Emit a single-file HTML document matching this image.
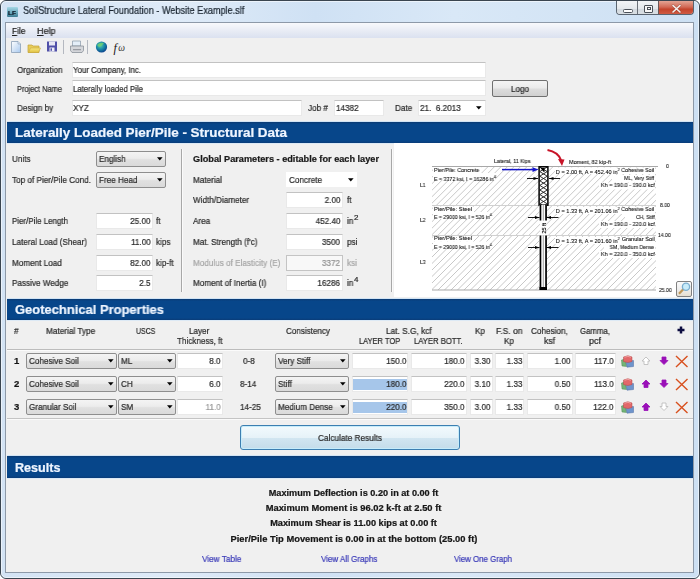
<!DOCTYPE html>
<html><head><meta charset="utf-8"><style>
*{margin:0;padding:0;box-sizing:border-box}
html,body{width:700px;height:579px;overflow:hidden;background:#fff}
body{position:relative;font-family:"Liberation Sans",sans-serif;font-size:9px;color:#222}
.a{position:absolute}
.t{position:absolute;white-space:nowrap;line-height:1;-webkit-text-stroke:0.22px currentColor;will-change:transform}
.hdr{position:absolute;left:7px;width:686px;height:21px;background:linear-gradient(#0b3a72,#07468a 10%,#07468a 90%,#0a3c78);box-shadow:0 -1px 0 #d2e4f4,0 1px 0 #dce9f5}
</style></head><body>
<div class="a" style="left:0;top:0;width:700px;height:579px;border:1px solid #3a4550;border-radius:6px 6px 6px 6px;background:linear-gradient(90deg,#d3e3f4 0%,#dfebf8 25%,#cfe1f4 45%,#d9e8f7 65%,#cde0f3 100%)"></div>
<div class="a" style="left:1px;top:1px;width:698px;height:577px;border:1px solid rgba(255,255,255,0.55);border-radius:5px"></div>
<div class="a" style="left:5px;top:22px;width:689px;height:551px;background:#f0f0f0;border:1px solid #8d99a8"></div>
<div class="a" style="left:6px;top:23px;width:687px;height:15px;background:linear-gradient(#f8f9fc,#e6eaf4 60%,#dbe1f0)"></div>
<div class="a" style="left:7px;top:6.5px;width:11px;height:10px;background:linear-gradient(#a6d8e6,#6aa8bc 55%,#3e7c92);border-radius:1px"></div>
<div class="t" style="left:8px;transform-origin:0 0;top:9.65px;font-size:6.2px;font-weight:bold;color:#0c1a28;transform:scaleX(1.0314);">LF</div>
<div class="t" style="left:22.5px;transform-origin:0 0;top:6.46px;font-size:10.2px;font-weight:normal;color:#1a2530;transform:scaleX(0.8950);">SoilStructure Lateral Foundation - Website Example.slf</div>
<div class="a" style="left:616px;top:1px;width:78px;height:14px;border:1px solid #5a6470;border-top:none;border-radius:0 0 4px 4px;overflow:hidden;background:#d0d6dc">
 <div class="a" style="left:0;top:0;width:21px;height:15px;background:linear-gradient(#f2f4f6,#e4e8ec 50%,#d2d8de 51%,#dde2e6);border-right:1px solid #6a7078"></div>
 <div class="a" style="left:21px;top:0;width:21px;height:15px;background:linear-gradient(#f2f4f6,#e4e8ec 50%,#d2d8de 51%,#dde2e6);border-right:1px solid #6a5858"></div>
 <div class="a" style="left:42px;top:0;width:36px;height:15px;background:linear-gradient(#e4a494,#d26a56 40%,#c4442c 55%,#cf5a42 85%,#d87a66)"></div>
 <div class="a" style="left:6px;top:7.5px;width:9.6px;height:4px;border:1px solid #4a5058;background:#fdfdfd;border-radius:1.5px"></div>
 <div class="a" style="left:27px;top:4px;width:9px;height:7.5px;border:1.2px solid #4a5058;border-radius:1px;background:#f6f6f6"></div>
 <div class="a" style="left:29.6px;top:6px;width:4.3px;height:2.8px;border:1px solid #4a5058;background:#fff"></div>
</div>
<svg class="a" style="left:658px;top:0.5px" width="36" height="16" viewBox="0 0 36 16"><path d="M15,4.5 L22,11 M22,4.5 L15,11" stroke="#5a2a20" stroke-width="2.6" stroke-linecap="round" opacity="0.3"/><path d="M15,4.5 L22,11 M22,4.5 L15,11" stroke="#f4f0ee" stroke-width="1.6" stroke-linecap="round"/></svg>
<svg class="a" style="left:0;top:36px" width="140" height="22" viewBox="0 36 140 22">
<defs>
<linearGradient id="gpage" x1="0" y1="0" x2="1" y2="1"><stop offset="0" stop-color="#ffffff"/><stop offset="1" stop-color="#a8c8ee"/></linearGradient>
<linearGradient id="gfold" x1="0" y1="0" x2="0" y2="1"><stop offset="0" stop-color="#f8e880"/><stop offset="1" stop-color="#e0c040"/></linearGradient>
<radialGradient id="gglobe" cx="0.4" cy="0.35" r="0.7"><stop offset="0" stop-color="#60d0a0"/><stop offset="0.5" stop-color="#1a8aa8"/><stop offset="1" stop-color="#0a3a8a"/></radialGradient>
</defs>
<path d="M11.5,41.5 H18 L20.5,44 V52.5 H11.5 Z" fill="url(#gpage)" stroke="#8aa0b8" stroke-width="0.8"/>
<path d="M18,41.5 V44 H20.5" fill="#dde8f4" stroke="#8aa0b8" stroke-width="0.6"/>
<path d="M28,45 H32 L33,46 H39 V52.5 H28 Z" fill="#e8cc58" stroke="#c0a038" stroke-width="0.7"/>
<path d="M28.5,52.5 L30.5,48 H40.5 L38.5,52.5 Z" fill="url(#gfold)" stroke="#c8a840" stroke-width="0.6"/>
<path d="M47,41.5 H57 V51.5 H47 Z" fill="#5050a8"/>
<rect x="49" y="41.5" width="6" height="4" fill="#e8e8f4"/>
<rect x="49.5" y="47.5" width="5" height="4" fill="#f0f0f8"/><rect x="50.5" y="48.3" width="1.5" height="2.5" fill="#5050a8"/>
<rect x="63" y="40" width="1" height="14" fill="#b4b8c0"/>
<path d="M72.5,41 H80.5 V46 H72.5 Z" fill="#e4eef8" stroke="#8898a8" stroke-width="0.7"/>
<path d="M70.5,46 H83.5 V50.5 L82,52.5 H72 L70.5,50.5 Z" fill="#d4d6da" stroke="#808690" stroke-width="0.7"/>
<rect x="73" y="49.2" width="8" height="1" fill="#8a8e96"/>
<rect x="87" y="40" width="1" height="14" fill="#b4b8c0"/>
<circle cx="101.5" cy="47" r="5.6" fill="url(#gglobe)"/>
<path d="M97,45 Q100,42 104,43 Q102,46 99,47 Z" fill="#70d070" opacity="0.8"/>
<text x="113.5" y="51.5" font-family="Liberation Serif" font-style="italic" font-size="12" fill="#151515">f</text>
<text x="118.3" y="51" font-family="Liberation Serif" font-style="italic" font-size="9.5" fill="#303030">ω</text>
</svg>
<div class="t" style="left:11.5px;transform-origin:0 0;top:26.52px;font-size:9.3px;font-weight:normal;color:#1e1e1e;transform:scaleX(0.9000);"><u>F</u>ile</div>
<div class="t" style="left:36.5px;transform-origin:0 0;top:26.52px;font-size:9.3px;font-weight:normal;color:#1e1e1e;transform:scaleX(0.9665);"><u>H</u>elp</div>
<div class="t" style="left:17px;transform-origin:0 0;top:65.98px;font-size:9px;font-weight:normal;color:#2a2a2a;transform:scaleX(0.8916);">Organization</div>
<div class="a" style="left:72px;top:62px;width:414px;height:16px;background:#fff;border:1px solid #e9e9e9;border-top-color:#c2c2c2;"></div>
<div class="t" style="left:73px;transform-origin:0 0;top:66.28px;font-size:9px;font-weight:normal;color:#2a2a2a;transform:scaleX(0.8713);">Your Company, Inc.</div>
<div class="t" style="left:17px;transform-origin:0 0;top:84.88px;font-size:9px;font-weight:normal;color:#2a2a2a;transform:scaleX(0.8252);">Project Name</div>
<div class="a" style="left:72px;top:80px;width:414px;height:16px;background:#fff;border:1px solid #e9e9e9;border-top-color:#c2c2c2;"></div>
<div class="t" style="left:73px;transform-origin:0 0;top:84.78px;font-size:9px;font-weight:normal;color:#2a2a2a;transform:scaleX(0.8635);">Laterally loaded Pile</div>
<div class="t" style="left:17px;transform-origin:0 0;top:104.08px;font-size:9px;font-weight:normal;color:#2a2a2a;transform:scaleX(0.9050);">Design by</div>
<div class="a" style="left:72px;top:100px;width:230px;height:16px;background:#fff;border:1px solid #e9e9e9;border-top-color:#c2c2c2;"></div>
<div class="t" style="left:73px;transform-origin:0 0;top:104.28px;font-size:9px;font-weight:normal;color:#2a2a2a;transform:scaleX(0.9050);">XYZ</div>
<div class="t" style="left:308px;transform-origin:0 0;top:104.08px;font-size:9px;font-weight:normal;color:#2a2a2a;transform:scaleX(0.9050);">Job #</div>
<div class="a" style="left:334px;top:100px;width:50px;height:16px;background:#fff;border:1px solid #e9e9e9;border-top-color:#c2c2c2;"></div>
<div class="t" style="left:335.5px;transform-origin:0 0;top:104.28px;font-size:9px;font-weight:normal;color:#2a2a2a;transform:scaleX(0.9050);">14382</div>
<div class="t" style="left:395px;transform-origin:0 0;top:104.08px;font-size:9px;font-weight:normal;color:#2a2a2a;transform:scaleX(0.9050);">Date</div>
<div class="a" style="left:418px;top:100px;width:68px;height:16px;background:#fff;border:1px solid #e9e9e9;border-top-color:#c2c2c2;"></div>
<div class="t" style="left:420px;transform-origin:0 0;top:104.28px;font-size:9px;font-weight:normal;color:#2a2a2a;transform:scaleX(0.9050);">21.&nbsp; 6.2013</div>
<svg class="a" style="left:476px;top:106px" width="6" height="4" viewBox="0 0 6 4"><path d="M0,0.3 H5.6 L2.8,3.4 Z" fill="#000"/></svg>
<div class="a" style="left:492px;top:80px;width:56px;height:17px;background:linear-gradient(#f4f4f4,#ebebeb 45%,#dcdcdc 55%,#d0d0d0);border:1px solid #707070;border-radius:2px"></div>
<div class="t" style="left:509.984375px;transform-origin:50% 0;top:85.08px;font-size:9px;font-weight:normal;color:#2a2a2a;transform:scaleX(0.9050);">Logo</div>
<div class="hdr" style="top:122px"></div>
<div class="t" style="left:15px;transform-origin:0 0;top:125.92px;font-size:13.2px;font-weight:bold;color:#eef5ff;transform:scaleX(1.0196);">Laterally Loaded Pier/Pile - Structural Data</div>
<div class="hdr" style="top:299px"></div>
<div class="t" style="left:15px;transform-origin:0 0;top:303.19px;font-size:13px;font-weight:bold;color:#eef5ff;transform:scaleX(0.9962);">Geotechnical Properties</div>
<div class="hdr" style="top:456px;height:21.5px"></div>
<div class="t" style="left:15px;transform-origin:0 0;top:461.63px;font-size:12.6px;font-weight:bold;color:#eef5ff;transform:scaleX(1.0000);">Results</div>
<div class="t" style="left:12px;transform-origin:0 0;top:154.78px;font-size:9px;font-weight:normal;color:#2a2a2a;transform:scaleX(0.9050);">Units</div>
<div class="a" style="left:96px;top:151px;width:70px;height:16px;background:linear-gradient(#f4f4f4,#ececec 45%,#e0e0e0 55%,#dadada);border:1px solid #8e8e8e;border-radius:2px"></div>
<div class="t" style="left:98.8px;transform-origin:0 0;top:155.48px;font-size:9px;font-weight:normal;color:#2a2a2a;transform:scaleX(0.9050);">English</div>
<svg class="a" style="left:156.5px;top:157.0px" width="6" height="4" viewBox="0 0 6 4"><path d="M0,0.3 H5.6 L2.8,3.4 Z" fill="#000"/></svg>
<div class="t" style="left:12px;transform-origin:0 0;top:175.88px;font-size:9px;font-weight:normal;color:#2a2a2a;transform:scaleX(0.9076);">Top of Pier/Pile Cond.</div>
<div class="a" style="left:96px;top:172px;width:70px;height:16px;background:linear-gradient(#f4f4f4,#ececec 45%,#e0e0e0 55%,#dadada);border:1px solid #8e8e8e;border-radius:2px"></div>
<div class="t" style="left:98.8px;transform-origin:0 0;top:176.48px;font-size:9px;font-weight:normal;color:#2a2a2a;transform:scaleX(0.9050);">Free Head</div>
<svg class="a" style="left:156.5px;top:178.0px" width="6" height="4" viewBox="0 0 6 4"><path d="M0,0.3 H5.6 L2.8,3.4 Z" fill="#000"/></svg>
<div class="t" style="left:12px;transform-origin:0 0;top:216.58px;font-size:9px;font-weight:normal;color:#2a2a2a;transform:scaleX(0.8812);">Pier/Pile Length</div>
<div class="a" style="left:96px;top:213px;width:57px;height:16px;background:#fff;border:1px solid #e9e9e9;border-top-color:#c2c2c2;"></div>
<div class="t" style="left:128.36875px;transform-origin:100% 0;top:216.98px;font-size:9px;font-weight:normal;color:#2a2a2a;transform:scaleX(0.9050);">25.00</div>
<div class="t" style="left:156.4px;transform-origin:0 0;top:216.58px;font-size:9px;font-weight:normal;color:#2a2a2a;transform:scaleX(0.9050);">ft</div>
<div class="t" style="left:12px;transform-origin:0 0;top:237.58px;font-size:9px;font-weight:normal;color:#2a2a2a;transform:scaleX(0.9084);">Lateral Load (Shear)</div>
<div class="a" style="left:96px;top:234px;width:57px;height:16px;background:#fff;border:1px solid #e9e9e9;border-top-color:#c2c2c2;"></div>
<div class="t" style="left:129.040625px;transform-origin:100% 0;top:237.98px;font-size:9px;font-weight:normal;color:#2a2a2a;transform:scaleX(0.9050);">11.00</div>
<div class="t" style="left:156.4px;transform-origin:0 0;top:237.58px;font-size:9px;font-weight:normal;color:#2a2a2a;transform:scaleX(0.9050);">kips</div>
<div class="t" style="left:12px;transform-origin:0 0;top:258.58px;font-size:9px;font-weight:normal;color:#2a2a2a;transform:scaleX(0.9050);">Moment Load</div>
<div class="a" style="left:96px;top:255px;width:57px;height:16px;background:#fff;border:1px solid #e9e9e9;border-top-color:#c2c2c2;"></div>
<div class="t" style="left:128.36875px;transform-origin:100% 0;top:258.98px;font-size:9px;font-weight:normal;color:#2a2a2a;transform:scaleX(0.9050);">82.00</div>
<div class="t" style="left:156.4px;transform-origin:0 0;top:258.58px;font-size:9px;font-weight:normal;color:#2a2a2a;transform:scaleX(0.9050);">kip-ft</div>
<div class="t" style="left:12px;transform-origin:0 0;top:278.58px;font-size:9px;font-weight:normal;color:#2a2a2a;transform:scaleX(0.9050);">Passive Wedge</div>
<div class="a" style="left:96px;top:275px;width:57px;height:16px;background:#fff;border:1px solid #e9e9e9;border-top-color:#c2c2c2;"></div>
<div class="t" style="left:138.384375px;transform-origin:100% 0;top:278.98px;font-size:9px;font-weight:normal;color:#2a2a2a;transform:scaleX(0.9050);">2.5</div>
<div class="a" style="left:181px;top:149px;width:1px;height:143px;background:#a8a8a8"></div>
<div class="a" style="left:182px;top:149px;width:1px;height:143px;background:#fafafa"></div>
<div class="a" style="left:390.5px;top:149px;width:1px;height:143px;background:#a8a8a8"></div>
<div class="a" style="left:391.5px;top:149px;width:1px;height:143px;background:#fafafa"></div>
<div class="t" style="left:193px;transform-origin:0 0;top:155.08px;font-size:9px;font-weight:bold;color:#1a1a1a;transform:scaleX(1.0187);">Global Parameters - editable for each layer</div>
<div class="t" style="left:193px;transform-origin:0 0;top:175.88px;font-size:9px;font-weight:normal;color:#2a2a2a;transform:scaleX(0.9050);">Material</div>
<div class="a" style="left:286px;top:172px;width:71px;height:15px;background:#fff"></div>
<div class="t" style="left:288.8px;transform-origin:0 0;top:175.98px;font-size:9px;font-weight:normal;color:#2a2a2a;transform:scaleX(0.9050);">Concrete</div>
<svg class="a" style="left:347.5px;top:177.5px" width="6" height="4" viewBox="0 0 6 4"><path d="M0,0.3 H5.6 L2.8,3.4 Z" fill="#000"/></svg>
<div class="t" style="left:193px;transform-origin:0 0;top:195.58px;font-size:9px;font-weight:normal;color:#2a2a2a;transform:scaleX(0.9050);">Width/Diameter</div>
<div class="a" style="left:286px;top:192px;width:57px;height:16px;background:#fff;border:1px solid #e9e9e9;border-top-color:#c2c2c2;"></div>
<div class="t" style="left:322.96875px;transform-origin:100% 0;top:195.98px;font-size:9px;font-weight:normal;color:#2a2a2a;transform:scaleX(0.9050);">2.00</div>
<div class="t" style="left:346.5px;transform-origin:0 0;top:195.58px;font-size:9px;font-weight:normal;color:#2a2a2a;transform:scaleX(0.9050);">ft</div>
<div class="t" style="left:193px;transform-origin:0 0;top:216.58px;font-size:9px;font-weight:normal;color:#2a2a2a;transform:scaleX(0.9050);">Area</div>
<div class="a" style="left:286px;top:213px;width:57px;height:16px;background:#fff;border:1px solid #e9e9e9;border-top-color:#c2c2c2;"></div>
<div class="t" style="left:312.96875px;transform-origin:100% 0;top:216.98px;font-size:9px;font-weight:normal;color:#2a2a2a;transform:scaleX(0.9050);">452.40</div>
<div class="t" style="left:346.5px;transform-origin:0 0;top:216.58px;font-size:9px;font-weight:normal;color:#2a2a2a;transform:scaleX(0.9050);">in</div>
<div class="t" style="left:353.5px;transform-origin:0 0;top:214.42px;font-size:8px;font-weight:normal;color:#2a2a2a;transform:scaleX(1.0000);">2</div>
<div class="t" style="left:193px;transform-origin:0 0;top:237.58px;font-size:9px;font-weight:normal;color:#2a2a2a;transform:scaleX(0.9050);">Mat. Strength (f'c)</div>
<div class="a" style="left:286px;top:234px;width:57px;height:16px;background:#fff;border:1px solid #e9e9e9;border-top-color:#c2c2c2;"></div>
<div class="t" style="left:320.46875px;transform-origin:100% 0;top:237.98px;font-size:9px;font-weight:normal;color:#2a2a2a;transform:scaleX(0.9050);">3500</div>
<div class="t" style="left:346.5px;transform-origin:0 0;top:237.58px;font-size:9px;font-weight:normal;color:#2a2a2a;transform:scaleX(0.9050);">psi</div>
<div class="t" style="left:193px;transform-origin:0 0;top:258.58px;font-size:9px;font-weight:normal;color:#a6a6a6;transform:scaleX(0.9050);">Modulus of Elasticity (E)</div>
<div class="a" style="left:286px;top:255px;width:57px;height:16px;background:#f8f8f8;border:1px solid #c4c4c4"></div>
<div class="t" style="left:320.46875px;transform-origin:100% 0;top:258.98px;font-size:9px;font-weight:normal;color:#909090;transform:scaleX(0.9050);">3372</div>
<div class="t" style="left:346.5px;transform-origin:0 0;top:258.58px;font-size:9px;font-weight:normal;color:#a6a6a6;transform:scaleX(0.9050);">ksi</div>
<div class="t" style="left:193px;transform-origin:0 0;top:278.58px;font-size:9px;font-weight:normal;color:#2a2a2a;transform:scaleX(0.9050);">Moment of Inertia (I)</div>
<div class="a" style="left:286px;top:275px;width:57px;height:16px;background:#fff;border:1px solid #e9e9e9;border-top-color:#c2c2c2;"></div>
<div class="t" style="left:315.46875px;transform-origin:100% 0;top:278.98px;font-size:9px;font-weight:normal;color:#2a2a2a;transform:scaleX(0.9050);">16286</div>
<div class="t" style="left:346.5px;transform-origin:0 0;top:278.58px;font-size:9px;font-weight:normal;color:#2a2a2a;transform:scaleX(0.9050);">in</div>
<div class="t" style="left:353.5px;transform-origin:0 0;top:276.42px;font-size:8px;font-weight:normal;color:#2a2a2a;transform:scaleX(1.0000);">4</div>
<div class="a" style="left:394px;top:143px;width:299px;height:154px;background:#fff"></div>
<svg class="a" style="left:0;top:0" width="700" height="579" viewBox="0 0 700 579"><defs><pattern id="conc" patternUnits="userSpaceOnUse" width="3.6" height="4.4" x="539.5" y="167"><rect width="3.6" height="4.4" fill="#fff"/><path d="M0,0 L3.6,4.4 M3.6,0 L0,4.4" stroke="#222" stroke-width="0.65"/></pattern></defs><clipPath id="sc166"><rect x="432" y="166" width="224" height="39.5"/></clipPath><path clip-path="url(#sc166)" d="M-54.80,300 L95.20,150 M-48.30,300 L101.70,150 M-41.80,300 L108.20,150 M-35.30,300 L114.70,150 M-28.80,300 L121.20,150 M-22.30,300 L127.70,150 M-15.80,300 L134.20,150 M-9.30,300 L140.70,150 M-2.80,300 L147.20,150 M3.70,300 L153.70,150 M10.20,300 L160.20,150 M16.70,300 L166.70,150 M23.20,300 L173.20,150 M29.70,300 L179.70,150 M36.20,300 L186.20,150 M42.70,300 L192.70,150 M49.20,300 L199.20,150 M55.70,300 L205.70,150 M62.20,300 L212.20,150 M68.70,300 L218.70,150 M75.20,300 L225.20,150 M81.70,300 L231.70,150 M88.20,300 L238.20,150 M94.70,300 L244.70,150 M101.20,300 L251.20,150 M107.70,300 L257.70,150 M114.20,300 L264.20,150 M120.70,300 L270.70,150 M127.20,300 L277.20,150 M133.70,300 L283.70,150 M140.20,300 L290.20,150 M146.70,300 L296.70,150 M153.20,300 L303.20,150 M159.70,300 L309.70,150 M166.20,300 L316.20,150 M172.70,300 L322.70,150 M179.20,300 L329.20,150 M185.70,300 L335.70,150 M192.20,300 L342.20,150 M198.70,300 L348.70,150 M205.20,300 L355.20,150 M211.70,300 L361.70,150 M218.20,300 L368.20,150 M224.70,300 L374.70,150 M231.20,300 L381.20,150 M237.70,300 L387.70,150 M244.20,300 L394.20,150 M250.70,300 L400.70,150 M257.20,300 L407.20,150 M263.70,300 L413.70,150 M270.20,300 L420.20,150 M276.70,300 L426.70,150 M283.20,300 L433.20,150 M289.70,300 L439.70,150 M296.20,300 L446.20,150 M302.70,300 L452.70,150 M309.20,300 L459.20,150 M315.70,300 L465.70,150 M322.20,300 L472.20,150 M328.70,300 L478.70,150 M335.20,300 L485.20,150 M341.70,300 L491.70,150 M348.20,300 L498.20,150 M354.70,300 L504.70,150 M361.20,300 L511.20,150 M367.70,300 L517.70,150 M374.20,300 L524.20,150 M380.70,300 L530.70,150 M387.20,300 L537.20,150 M393.70,300 L543.70,150 M400.20,300 L550.20,150 M406.70,300 L556.70,150 M413.20,300 L563.20,150 M419.70,300 L569.70,150 M426.20,300 L576.20,150 M432.70,300 L582.70,150 M439.20,300 L589.20,150 M445.70,300 L595.70,150 M452.20,300 L602.20,150 M458.70,300 L608.70,150 M465.20,300 L615.20,150 M471.70,300 L621.70,150 M478.20,300 L628.20,150 M484.70,300 L634.70,150 M491.20,300 L641.20,150 M497.70,300 L647.70,150 M504.20,300 L654.20,150 M510.70,300 L660.70,150 M517.20,300 L667.20,150 M523.70,300 L673.70,150 M530.20,300 L680.20,150 M536.70,300 L686.70,150 M543.20,300 L693.20,150 M549.70,300 L699.70,150 M556.20,300 L706.20,150 M562.70,300 L712.70,150 M569.20,300 L719.20,150 M575.70,300 L725.70,150 M582.20,300 L732.20,150 M588.70,300 L738.70,150 M595.20,300 L745.20,150 M601.70,300 L751.70,150 M608.20,300 L758.20,150 M614.70,300 L764.70,150 M621.20,300 L771.20,150 M627.70,300 L777.70,150 M634.20,300 L784.20,150 M640.70,300 L790.70,150 M647.20,300 L797.20,150 M653.70,300 L803.70,150 M660.20,300 L810.20,150 M666.70,300 L816.70,150 M673.20,300 L823.20,150 M679.70,300 L829.70,150 M686.20,300 L836.20,150 M692.70,300 L842.70,150 M699.20,300 L849.20,150" stroke="#c8c8c8" stroke-width="1" fill="none"/><clipPath id="sc205"><rect x="432" y="205.5" width="224" height="30.0"/></clipPath><path clip-path="url(#sc205)" d="M-23.30,300 L126.70,150 M-16.80,300 L133.20,150 M-10.30,300 L139.70,150 M-3.80,300 L146.20,150 M2.70,300 L152.70,150 M9.20,300 L159.20,150 M15.70,300 L165.70,150 M22.20,300 L172.20,150 M28.70,300 L178.70,150 M35.20,300 L185.20,150 M41.70,300 L191.70,150 M48.20,300 L198.20,150 M54.70,300 L204.70,150 M61.20,300 L211.20,150 M67.70,300 L217.70,150 M74.20,300 L224.20,150 M80.70,300 L230.70,150 M87.20,300 L237.20,150 M93.70,300 L243.70,150 M100.20,300 L250.20,150 M106.70,300 L256.70,150 M113.20,300 L263.20,150 M119.70,300 L269.70,150 M126.20,300 L276.20,150 M132.70,300 L282.70,150 M139.20,300 L289.20,150 M145.70,300 L295.70,150 M152.20,300 L302.20,150 M158.70,300 L308.70,150 M165.20,300 L315.20,150 M171.70,300 L321.70,150 M178.20,300 L328.20,150 M184.70,300 L334.70,150 M191.20,300 L341.20,150 M197.70,300 L347.70,150 M204.20,300 L354.20,150 M210.70,300 L360.70,150 M217.20,300 L367.20,150 M223.70,300 L373.70,150 M230.20,300 L380.20,150 M236.70,300 L386.70,150 M243.20,300 L393.20,150 M249.70,300 L399.70,150 M256.20,300 L406.20,150 M262.70,300 L412.70,150 M269.20,300 L419.20,150 M275.70,300 L425.70,150 M282.20,300 L432.20,150 M288.70,300 L438.70,150 M295.20,300 L445.20,150 M301.70,300 L451.70,150 M308.20,300 L458.20,150 M314.70,300 L464.70,150 M321.20,300 L471.20,150 M327.70,300 L477.70,150 M334.20,300 L484.20,150 M340.70,300 L490.70,150 M347.20,300 L497.20,150 M353.70,300 L503.70,150 M360.20,300 L510.20,150 M366.70,300 L516.70,150 M373.20,300 L523.20,150 M379.70,300 L529.70,150 M386.20,300 L536.20,150 M392.70,300 L542.70,150 M399.20,300 L549.20,150 M405.70,300 L555.70,150 M412.20,300 L562.20,150 M418.70,300 L568.70,150 M425.20,300 L575.20,150 M431.70,300 L581.70,150 M438.20,300 L588.20,150 M444.70,300 L594.70,150 M451.20,300 L601.20,150 M457.70,300 L607.70,150 M464.20,300 L614.20,150 M470.70,300 L620.70,150 M477.20,300 L627.20,150 M483.70,300 L633.70,150 M490.20,300 L640.20,150 M496.70,300 L646.70,150 M503.20,300 L653.20,150 M509.70,300 L659.70,150 M516.20,300 L666.20,150 M522.70,300 L672.70,150 M529.20,300 L679.20,150 M535.70,300 L685.70,150 M542.20,300 L692.20,150 M548.70,300 L698.70,150 M555.20,300 L705.20,150 M561.70,300 L711.70,150 M568.20,300 L718.20,150 M574.70,300 L724.70,150 M581.20,300 L731.20,150 M587.70,300 L737.70,150 M594.20,300 L744.20,150 M600.70,300 L750.70,150 M607.20,300 L757.20,150 M613.70,300 L763.70,150 M620.20,300 L770.20,150 M626.70,300 L776.70,150 M633.20,300 L783.20,150 M639.70,300 L789.70,150 M646.20,300 L796.20,150 M652.70,300 L802.70,150 M659.20,300 L809.20,150 M665.70,300 L815.70,150 M672.20,300 L822.20,150 M678.70,300 L828.70,150 M685.20,300 L835.20,150 M691.70,300 L841.70,150 M698.20,300 L848.20,150" stroke="#c8c8c8" stroke-width="1" fill="none"/><clipPath id="sc235"><rect x="432" y="235.5" width="224" height="54.5"/></clipPath><path clip-path="url(#sc235)" d="M18.50,300 L168.50,150 M25.00,300 L175.00,150 M31.50,300 L181.50,150 M38.00,300 L188.00,150 M44.50,300 L194.50,150 M51.00,300 L201.00,150 M57.50,300 L207.50,150 M64.00,300 L214.00,150 M70.50,300 L220.50,150 M77.00,300 L227.00,150 M83.50,300 L233.50,150 M90.00,300 L240.00,150 M96.50,300 L246.50,150 M103.00,300 L253.00,150 M109.50,300 L259.50,150 M116.00,300 L266.00,150 M122.50,300 L272.50,150 M129.00,300 L279.00,150 M135.50,300 L285.50,150 M142.00,300 L292.00,150 M148.50,300 L298.50,150 M155.00,300 L305.00,150 M161.50,300 L311.50,150 M168.00,300 L318.00,150 M174.50,300 L324.50,150 M181.00,300 L331.00,150 M187.50,300 L337.50,150 M194.00,300 L344.00,150 M200.50,300 L350.50,150 M207.00,300 L357.00,150 M213.50,300 L363.50,150 M220.00,300 L370.00,150 M226.50,300 L376.50,150 M233.00,300 L383.00,150 M239.50,300 L389.50,150 M246.00,300 L396.00,150 M252.50,300 L402.50,150 M259.00,300 L409.00,150 M265.50,300 L415.50,150 M272.00,300 L422.00,150 M278.50,300 L428.50,150 M285.00,300 L435.00,150 M291.50,300 L441.50,150 M298.00,300 L448.00,150 M304.50,300 L454.50,150 M311.00,300 L461.00,150 M317.50,300 L467.50,150 M324.00,300 L474.00,150 M330.50,300 L480.50,150 M337.00,300 L487.00,150 M343.50,300 L493.50,150 M350.00,300 L500.00,150 M356.50,300 L506.50,150 M363.00,300 L513.00,150 M369.50,300 L519.50,150 M376.00,300 L526.00,150 M382.50,300 L532.50,150 M389.00,300 L539.00,150 M395.50,300 L545.50,150 M402.00,300 L552.00,150 M408.50,300 L558.50,150 M415.00,300 L565.00,150 M421.50,300 L571.50,150 M428.00,300 L578.00,150 M434.50,300 L584.50,150 M441.00,300 L591.00,150 M447.50,300 L597.50,150 M454.00,300 L604.00,150 M460.50,300 L610.50,150 M467.00,300 L617.00,150 M473.50,300 L623.50,150 M480.00,300 L630.00,150 M486.50,300 L636.50,150 M493.00,300 L643.00,150 M499.50,300 L649.50,150 M506.00,300 L656.00,150 M512.50,300 L662.50,150 M519.00,300 L669.00,150 M525.50,300 L675.50,150 M532.00,300 L682.00,150 M538.50,300 L688.50,150 M545.00,300 L695.00,150 M551.50,300 L701.50,150 M558.00,300 L708.00,150 M564.50,300 L714.50,150 M571.00,300 L721.00,150 M577.50,300 L727.50,150 M584.00,300 L734.00,150 M590.50,300 L740.50,150 M597.00,300 L747.00,150 M603.50,300 L753.50,150 M610.00,300 L760.00,150 M616.50,300 L766.50,150 M623.00,300 L773.00,150 M629.50,300 L779.50,150 M636.00,300 L786.00,150 M642.50,300 L792.50,150 M649.00,300 L799.00,150 M655.50,300 L805.50,150 M662.00,300 L812.00,150 M668.50,300 L818.50,150 M675.00,300 L825.00,150 M681.50,300 L831.50,150 M688.00,300 L838.00,150 M694.50,300 L844.50,150" stroke="#c8c8c8" stroke-width="1" fill="none"/>
<line x1="432" y1="166.5" x2="658" y2="166.5" stroke="#a8a8a8" stroke-width="1"/>
<line x1="432" y1="205.5" x2="656" y2="205.5" stroke="#d0d0d0" stroke-width="1"/>
<line x1="432" y1="235.5" x2="656" y2="235.5" stroke="#d0d0d0" stroke-width="1"/>
<line x1="432" y1="290" x2="656" y2="290" stroke="#a8a8a8" stroke-width="1"/>
<g fill="#fff">
<rect x="433" y="167" width="48" height="6"/><rect x="433" y="173" width="62" height="7"/>
<rect x="433" y="206.5" width="40" height="5.5"/><rect x="433" y="212" width="58" height="7"/>
<rect x="433" y="236.5" width="40" height="5"/><rect x="433" y="241.5" width="58" height="7"/>
<rect x="555" y="167.5" width="100" height="6.5"/><rect x="612" y="175" width="43" height="7"/><rect x="599" y="182.5" width="56" height="7"/>
<rect x="555" y="207" width="100" height="7"/><rect x="625" y="214" width="30" height="7"/><rect x="599" y="221" width="56" height="7"/>
<rect x="555" y="237" width="100" height="7"/><rect x="604" y="244" width="51" height="7"/><rect x="599" y="251" width="56" height="7"/>
</g>
<rect x="539.1" y="166.8" width="8.8" height="38.4" fill="#fff"/><clipPath id="cclip"><rect x="539.1" y="166.8" width="8.8" height="38.4"/></clipPath><path clip-path="url(#cclip)" d="M539.8,167.0 L547.2,171.6 M547.2,167.0 L539.8,171.6 M539.8,171.6 L547.2,176.2 M547.2,171.6 L539.8,176.2 M539.8,176.2 L547.2,180.8 M547.2,176.2 L539.8,180.8 M539.8,180.8 L547.2,185.4 M547.2,180.8 L539.8,185.4 M539.8,185.4 L547.2,190.0 M547.2,185.4 L539.8,190.0 M539.8,190.0 L547.2,194.6 M547.2,190.0 L539.8,194.6 M539.8,194.6 L547.2,199.2 M547.2,194.6 L539.8,199.2 M539.8,199.2 L547.2,203.8 M547.2,199.2 L539.8,203.8 M539.8,203.8 L547.2,208.4 M547.2,203.8 L539.8,208.4" stroke="#1a1a1a" stroke-width="0.9"/><path d="M540.5,168 L544.5,168 L544.5,172.5 Z" fill="#000"/><rect x="539.1" y="166.8" width="8.8" height="38.4" fill="none" stroke="#000" stroke-width="1.5"/><path d="M541,168.5 L544,168.5 L544,172 Z" fill="#000"/>
<rect x="539.5" y="205" width="7.5" height="15.5" fill="#fff"/>
<rect x="539.6" y="205" width="1.7" height="15.5" fill="#000"/><rect x="545.2" y="205" width="1.7" height="15.5" fill="#000"/>
<line x1="543.3" y1="205" x2="543.3" y2="220.5" stroke="#666" stroke-width="0.6"/>
<rect x="539.5" y="235.5" width="7.5" height="54.5" fill="#fff"/>
<rect x="539.6" y="235.5" width="1.7" height="54.5" fill="#000"/><rect x="545.2" y="235.5" width="1.7" height="54.5" fill="#000"/>
<line x1="543.3" y1="235.5" x2="543.3" y2="287" stroke="#666" stroke-width="0.6"/>
<rect x="539.5" y="287" width="7.5" height="3" fill="#000"/>
<rect x="540" y="221" width="6" height="14" fill="#fff"/>
<text x="0" y="0" font-family="Liberation Sans" font-size="6" fill="#000" stroke="#000" stroke-width="0.15" transform="translate(545.6,233.5) rotate(-90) scale(0.9,1)">25 ft</text>
<g stroke="#000" stroke-width="0.9" fill="#000"><line x1="527" y1="178.5" x2="538" y2="178.5"/><path d="M538,178.5 L533.5,176.9 L533.5,180.1 Z" stroke="none"/><line x1="549" y1="178.5" x2="560" y2="178.5"/><path d="M549,178.5 L553.5,176.9 L553.5,180.1 Z" stroke="none"/><line x1="528" y1="217.5" x2="539.5" y2="217.5"/><path d="M539.5,217.5 L535.0,215.9 L535.0,219.1 Z" stroke="none"/><line x1="546.5" y1="217.5" x2="558.5" y2="217.5"/><path d="M546.5,217.5 L551.0,215.9 L551.0,219.1 Z" stroke="none"/><line x1="528" y1="247.5" x2="539.5" y2="247.5"/><path d="M539.5,247.5 L535.0,245.9 L535.0,249.1 Z" stroke="none"/><line x1="546.5" y1="247.5" x2="558.5" y2="247.5"/><path d="M546.5,247.5 L551.0,245.9 L551.0,249.1 Z" stroke="none"/></g>
<line x1="502" y1="169.6" x2="534" y2="169.6" stroke="#1414c8" stroke-width="1.5"/>
<path d="M538.6,169.6 L532.5,167.2 L532.5,172 Z" fill="#1414c8"/>
<path d="M547.5,150 Q558,152 561,160" stroke="#c81428" stroke-width="2" fill="none"/>
<path d="M562,166 L558,159 L564.5,159.5 Z" fill="#c81428"/>
</svg>
<div class="t" style="left:434px;transform-origin:0 0;top:167.96px;font-size:5.6px;font-weight:normal;color:#0a0a0a;transform:scaleX(0.9713);-webkit-text-stroke:0.08px currentColor">Pier/Pile: Concrete</div>
<div class="t" style="left:434px;transform-origin:0 0;top:174.86px;font-size:5.6px;font-weight:normal;color:#0a0a0a;transform:scaleX(0.9439);-webkit-text-stroke:0.08px currentColor">E = 3372 ksi, I = 16286 in<sup style="font-size:4px;vertical-align:3px">4</sup></div>
<div class="t" style="left:434px;transform-origin:0 0;top:206.86px;font-size:5.6px;font-weight:normal;color:#0a0a0a;transform:scaleX(1.0358);-webkit-text-stroke:0.08px currentColor">Pier/Pile: Steel</div>
<div class="t" style="left:434px;transform-origin:0 0;top:213.36px;font-size:5.6px;font-weight:normal;color:#0a0a0a;transform:scaleX(0.9268);-webkit-text-stroke:0.08px currentColor">E = 29000 ksi, I = 526 in<sup style="font-size:4px;vertical-align:3px">4</sup></div>
<div class="t" style="left:434px;transform-origin:0 0;top:236.36px;font-size:5.6px;font-weight:normal;color:#0a0a0a;transform:scaleX(1.0358);-webkit-text-stroke:0.08px currentColor">Pier/Pile: Steel</div>
<div class="t" style="left:434px;transform-origin:0 0;top:243.06px;font-size:5.6px;font-weight:normal;color:#0a0a0a;transform:scaleX(0.9268);-webkit-text-stroke:0.08px currentColor">E = 29000 ksi, I = 526 in<sup style="font-size:4px;vertical-align:3px">4</sup></div>
<div class="t" style="left:420.4px;transform-origin:0 0;top:182.96px;font-size:5.6px;font-weight:normal;color:#0a0a0a;transform:scaleX(0.9050);-webkit-text-stroke:0.08px currentColor">L1</div>
<div class="t" style="left:420.4px;transform-origin:0 0;top:217.66px;font-size:5.6px;font-weight:normal;color:#0a0a0a;transform:scaleX(0.9050);-webkit-text-stroke:0.08px currentColor">L2</div>
<div class="t" style="left:420.4px;transform-origin:0 0;top:259.66px;font-size:5.6px;font-weight:normal;color:#0a0a0a;transform:scaleX(0.9050);-webkit-text-stroke:0.08px currentColor">L3</div>
<div class="t" style="left:493.7px;transform-origin:0 0;top:158.96px;font-size:5.6px;font-weight:normal;color:#0a0a0a;transform:scaleX(0.9514);-webkit-text-stroke:0.08px currentColor">Lateral, 11 Kips</div>
<div class="t" style="left:569px;transform-origin:0 0;top:160.16px;font-size:5.6px;font-weight:normal;color:#0a0a0a;transform:scaleX(0.9718);-webkit-text-stroke:0.08px currentColor">Moment, 82 kip-ft</div>
<div class="t" style="left:555.7875px;transform-origin:100% 0;top:168.16px;font-size:5.6px;font-weight:normal;color:#0a0a0a;transform:scaleX(1.0029);-webkit-text-stroke:0.08px currentColor">D = 2.00 ft, A = 452.40 in<sup style="font-size:4px;vertical-align:3px">2</sup></div>
<div class="t" style="left:620.296875px;transform-origin:100% 0;top:168.36px;font-size:5.6px;font-weight:normal;color:#0a0a0a;transform:scaleX(0.9648);-webkit-text-stroke:0.08px currentColor">Cohesive Soil</div>
<div class="t" style="left:621.328125px;transform-origin:100% 0;top:176.36px;font-size:5.6px;font-weight:normal;color:#0a0a0a;transform:scaleX(0.9050);-webkit-text-stroke:0.08px currentColor">ML, Very Stiff</div>
<div class="t" style="left:599.609375px;transform-origin:100% 0;top:183.36px;font-size:5.6px;font-weight:normal;color:#0a0a0a;transform:scaleX(0.9838);-webkit-text-stroke:0.08px currentColor">Kh = 190.0 - 190.0 kcf</div>
<div class="t" style="left:555.7875px;transform-origin:100% 0;top:207.16px;font-size:5.6px;font-weight:normal;color:#0a0a0a;transform:scaleX(1.0029);-webkit-text-stroke:0.08px currentColor">D = 1.33 ft, A = 201.06 in<sup style="font-size:4px;vertical-align:3px">2</sup></div>
<div class="t" style="left:620.296875px;transform-origin:100% 0;top:207.36px;font-size:5.6px;font-weight:normal;color:#0a0a0a;transform:scaleX(0.9648);-webkit-text-stroke:0.08px currentColor">Cohesive Soil</div>
<div class="t" style="left:633.765625px;transform-origin:100% 0;top:215.36px;font-size:5.6px;font-weight:normal;color:#0a0a0a;transform:scaleX(0.9050);-webkit-text-stroke:0.08px currentColor">CH, Stiff</div>
<div class="t" style="left:599.609375px;transform-origin:100% 0;top:222.36px;font-size:5.6px;font-weight:normal;color:#0a0a0a;transform:scaleX(0.9838);-webkit-text-stroke:0.08px currentColor">Kh = 190.0 - 220.0 kcf</div>
<div class="t" style="left:555.7875px;transform-origin:100% 0;top:237.16px;font-size:5.6px;font-weight:normal;color:#0a0a0a;transform:scaleX(1.0029);-webkit-text-stroke:0.08px currentColor">D = 1.33 ft, A = 201.60 in<sup style="font-size:4px;vertical-align:3px">2</sup></div>
<div class="t" style="left:621.84375px;transform-origin:100% 0;top:237.36px;font-size:5.6px;font-weight:normal;color:#0a0a0a;transform:scaleX(1.0105);-webkit-text-stroke:0.08px currentColor">Granular Soil</div>
<div class="t" style="left:605.375px;transform-origin:100% 0;top:245.36px;font-size:5.6px;font-weight:normal;color:#0a0a0a;transform:scaleX(0.9050);-webkit-text-stroke:0.08px currentColor">SM, Medium Dense</div>
<div class="t" style="left:599.609375px;transform-origin:100% 0;top:252.36px;font-size:5.6px;font-weight:normal;color:#0a0a0a;transform:scaleX(0.9838);-webkit-text-stroke:0.08px currentColor">Kh = 220.0 - 350.0 kcf</div>
<div class="t" style="left:666px;transform-origin:0 0;top:163.66px;font-size:5.6px;font-weight:normal;color:#0a0a0a;transform:scaleX(0.9050);-webkit-text-stroke:0.08px currentColor">0</div>
<div class="t" style="left:659.5px;transform-origin:0 0;top:203.46px;font-size:5.6px;font-weight:normal;color:#0a0a0a;transform:scaleX(0.9050);-webkit-text-stroke:0.08px currentColor">8.00</div>
<div class="t" style="left:658px;transform-origin:0 0;top:233.16px;font-size:5.6px;font-weight:normal;color:#0a0a0a;transform:scaleX(0.9050);-webkit-text-stroke:0.08px currentColor">14.00</div>
<div class="t" style="left:658.8px;transform-origin:0 0;top:287.66px;font-size:5.6px;font-weight:normal;color:#0a0a0a;transform:scaleX(0.9050);-webkit-text-stroke:0.08px currentColor">25.00</div>
<div class="a" style="left:676px;top:281px;width:16px;height:15.5px;border:1px solid #808080;border-radius:2px;background:linear-gradient(#fafafa,#eeeeee 50%,#e6ded0)"></div>
<svg class="a" style="left:676px;top:281px" width="16" height="15" viewBox="0 0 16 15"><line x1="7.5" y1="8" x2="3" y2="12.8" stroke="#c09858" stroke-width="2.2"/><circle cx="10" cy="5.8" r="3.6" fill="#c8ecfa" stroke="#7aaed0" stroke-width="1.3"/></svg>
<div class="t" style="left:14px;transform-origin:0 0;top:327.28px;font-size:9px;font-weight:normal;color:#2a2a2a;transform:scaleX(0.9050);">#</div>
<div class="t" style="left:45.8px;transform-origin:0 0;top:327.28px;font-size:9px;font-weight:normal;color:#2a2a2a;transform:scaleX(0.9153);">Material Type</div>
<div class="t" style="left:136.2px;transform-origin:0 0;top:327.28px;font-size:9px;font-weight:normal;color:#2a2a2a;transform:scaleX(0.7715);">USCS</div>
<div class="t" style="left:189px;transform-origin:0 0;top:327.28px;font-size:9px;font-weight:normal;color:#2a2a2a;transform:scaleX(0.8972);">Layer</div>
<div class="t" style="left:177.1px;transform-origin:0 0;top:337.48px;font-size:9px;font-weight:normal;color:#2a2a2a;transform:scaleX(0.9027);">Thickness, ft</div>
<div class="t" style="left:286.2px;transform-origin:0 0;top:327.28px;font-size:9px;font-weight:normal;color:#2a2a2a;transform:scaleX(0.8974);">Consistency</div>
<div class="t" style="left:386.4px;transform-origin:0 0;top:327.28px;font-size:9px;font-weight:normal;color:#2a2a2a;transform:scaleX(0.9226);">Lat. S.G, kcf</div>
<div class="t" style="left:358.7px;transform-origin:0 0;top:337.48px;font-size:9px;font-weight:normal;color:#2a2a2a;transform:scaleX(0.8318);">LAYER TOP</div>
<div class="t" style="left:414.1px;transform-origin:0 0;top:337.48px;font-size:9px;font-weight:normal;color:#2a2a2a;transform:scaleX(0.8547);">LAYER BOTT.</div>
<div class="t" style="left:475px;transform-origin:0 0;top:327.28px;font-size:9px;font-weight:normal;color:#2a2a2a;transform:scaleX(0.9078);">Kp</div>
<div class="t" style="left:495.6px;transform-origin:0 0;top:327.28px;font-size:9px;font-weight:normal;color:#2a2a2a;transform:scaleX(0.9459);">F.S. on</div>
<div class="t" style="left:504.4px;transform-origin:0 0;top:337.48px;font-size:9px;font-weight:normal;color:#2a2a2a;transform:scaleX(0.9078);">Kp</div>
<div class="t" style="left:530.8px;transform-origin:0 0;top:327.28px;font-size:9px;font-weight:normal;color:#2a2a2a;transform:scaleX(0.9079);">Cohesion,</div>
<div class="t" style="left:543.7px;transform-origin:0 0;top:337.48px;font-size:9px;font-weight:normal;color:#2a2a2a;transform:scaleX(0.9552);">ksf</div>
<div class="t" style="left:579.6px;transform-origin:0 0;top:327.28px;font-size:9px;font-weight:normal;color:#2a2a2a;transform:scaleX(0.8663);">Gamma,</div>
<div class="t" style="left:588.9px;transform-origin:0 0;top:337.48px;font-size:9px;font-weight:normal;color:#2a2a2a;transform:scaleX(1.0070);">pcf</div>
<svg class="a" style="left:677px;top:326px" width="8" height="8" viewBox="0 0 8 8"><path d="M4,0.5 V7.5 M0.5,4 H7.5" stroke="#0c0c40" stroke-width="2.5"/></svg>
<div class="a" style="left:7px;top:349px;width:686px;height:1px;background:#bcbcbc"></div>
<div class="a" style="left:7px;top:350px;width:686px;height:1px;background:#fbfbfb"></div>
<div class="t" style="left:14px;transform-origin:0 0;top:356.35px;font-size:9.5px;font-weight:bold;color:#151515;transform:scaleX(1.0000);">1</div>
<div class="a" style="left:26px;top:353px;width:91px;height:16px;background:linear-gradient(#f4f4f4,#ececec 45%,#e0e0e0 55%,#dadada);border:1px solid #8e8e8e;border-radius:2px"></div>
<div class="t" style="left:28.8px;transform-origin:0 0;top:357.48px;font-size:9px;font-weight:normal;color:#2a2a2a;transform:scaleX(0.9050);">Cohesive Soil</div>
<svg class="a" style="left:107.5px;top:359.0px" width="6" height="4" viewBox="0 0 6 4"><path d="M0,0.3 H5.6 L2.8,3.4 Z" fill="#000"/></svg>
<div class="a" style="left:118px;top:353px;width:58px;height:16px;background:linear-gradient(#f4f4f4,#ececec 45%,#e0e0e0 55%,#dadada);border:1px solid #8e8e8e;border-radius:2px"></div>
<div class="t" style="left:120.8px;transform-origin:0 0;top:357.48px;font-size:9px;font-weight:normal;color:#2a2a2a;transform:scaleX(0.9050);">ML</div>
<svg class="a" style="left:166.5px;top:359.0px" width="6" height="4" viewBox="0 0 6 4"><path d="M0,0.3 H5.6 L2.8,3.4 Z" fill="#000"/></svg>
<div class="a" style="left:177px;top:353px;width:46px;height:16px;background:#fff;border:1px solid #e9e9e9;border-top-color:#c2c2c2;"></div>
<div class="t" style="left:208.284375px;transform-origin:100% 0;top:357.08px;font-size:9px;font-weight:normal;color:#2a2a2a;transform:scaleX(0.9050);">8.0</div>
<div class="t" style="left:242.7px;transform-origin:0 0;top:357.08px;font-size:9px;font-weight:normal;color:#2a2a2a;transform:scaleX(0.9050);">0-8</div>
<div class="a" style="left:275px;top:353px;width:74px;height:16px;background:linear-gradient(#f4f4f4,#ececec 45%,#e0e0e0 55%,#dadada);border:1px solid #8e8e8e;border-radius:2px"></div>
<div class="t" style="left:277.8px;transform-origin:0 0;top:357.48px;font-size:9px;font-weight:normal;color:#2a2a2a;transform:scaleX(0.9050);">Very Stiff</div>
<svg class="a" style="left:339.5px;top:359.0px" width="6" height="4" viewBox="0 0 6 4"><path d="M0,0.3 H5.6 L2.8,3.4 Z" fill="#000"/></svg>
<div class="a" style="left:352px;top:353px;width:56px;height:16px;background:#fff;border:1px solid #e9e9e9;border-top-color:#c2c2c2;"></div>
<div class="t" style="left:383.86875px;transform-origin:100% 0;top:357.08px;font-size:9px;font-weight:normal;color:#2a2a2a;transform:scaleX(0.9050);">150.0</div>
<div class="a" style="left:411px;top:353px;width:56px;height:16px;background:#fff;border:1px solid #e9e9e9;border-top-color:#c2c2c2;"></div>
<div class="t" style="left:442.46875px;transform-origin:100% 0;top:357.08px;font-size:9px;font-weight:normal;color:#2a2a2a;transform:scaleX(0.9050);">180.0</div>
<div class="a" style="left:470px;top:353px;width:23px;height:16px;background:#fff;border:1px solid #e9e9e9;border-top-color:#c2c2c2;"></div>
<div class="t" style="left:473.06875px;transform-origin:100% 0;top:357.08px;font-size:9px;font-weight:normal;color:#2a2a2a;transform:scaleX(0.9050);">3.30</div>
<div class="a" style="left:495px;top:353px;width:29px;height:16px;background:#fff;border:1px solid #e9e9e9;border-top-color:#c2c2c2;"></div>
<div class="t" style="left:504.56875px;transform-origin:100% 0;top:357.08px;font-size:9px;font-weight:normal;color:#2a2a2a;transform:scaleX(0.9050);">1.33</div>
<div class="a" style="left:527px;top:353px;width:46px;height:16px;background:#fff;border:1px solid #e9e9e9;border-top-color:#c2c2c2;"></div>
<div class="t" style="left:553.36875px;transform-origin:100% 0;top:357.08px;font-size:9px;font-weight:normal;color:#2a2a2a;transform:scaleX(0.9050);">1.00</div>
<div class="a" style="left:575px;top:353px;width:41px;height:16px;background:#fff;border:1px solid #e9e9e9;border-top-color:#c2c2c2;"></div>
<div class="t" style="left:591.940625px;transform-origin:100% 0;top:357.08px;font-size:9px;font-weight:normal;color:#2a2a2a;transform:scaleX(0.9050);">117.0</div>
<svg class="a" style="left:618px;top:353px" width="74" height="16" viewBox="618 353 74 16">
<path d="M621.5,360 L625.5,359 L626.5,366.5 L622,366 Z" fill="#74b478" stroke="#4a8a50" stroke-width="0.5"/>
<path d="M626,361 L633.5,360.5 L633.5,366.5 L627,367.2 Z" fill="#6e94cc" stroke="#4a6aa0" stroke-width="0.5"/>
<path d="M623.5,357 Q628,354.5 632,357 L632,361.5 Q628,363.5 623.5,361.5 Z" fill="#e2686a" stroke="#b04848" stroke-width="0.5"/>
<path d="M624.5,357.2 Q628,355.5 631,357.2" stroke="#f4b0b0" stroke-width="0.8" fill="none"/>
<path d="M646,357 L650,361 H648 V364.5 H644 V361 H642 Z" fill="#fff" stroke="#b8b8b8" stroke-width="0.8"/><path d="M664,364.5 L668,360.5 H666 V357 H662 V360.5 H660 Z" fill="#9a10b8" stroke="#9a10b8" stroke-width="0.8"/><path d="M676,356 L687.5,367 M687.5,356 L676,367" stroke="#d8501e" stroke-width="1.4"/></svg>
<div class="t" style="left:14px;transform-origin:0 0;top:379.35px;font-size:9.5px;font-weight:bold;color:#151515;transform:scaleX(1.0000);">2</div>
<div class="a" style="left:26px;top:376px;width:91px;height:16px;background:linear-gradient(#f4f4f4,#ececec 45%,#e0e0e0 55%,#dadada);border:1px solid #8e8e8e;border-radius:2px"></div>
<div class="t" style="left:28.8px;transform-origin:0 0;top:380.48px;font-size:9px;font-weight:normal;color:#2a2a2a;transform:scaleX(0.9050);">Cohesive Soil</div>
<svg class="a" style="left:107.5px;top:382.0px" width="6" height="4" viewBox="0 0 6 4"><path d="M0,0.3 H5.6 L2.8,3.4 Z" fill="#000"/></svg>
<div class="a" style="left:118px;top:376px;width:58px;height:16px;background:linear-gradient(#f4f4f4,#ececec 45%,#e0e0e0 55%,#dadada);border:1px solid #8e8e8e;border-radius:2px"></div>
<div class="t" style="left:120.8px;transform-origin:0 0;top:380.48px;font-size:9px;font-weight:normal;color:#2a2a2a;transform:scaleX(0.9050);">CH</div>
<svg class="a" style="left:166.5px;top:382.0px" width="6" height="4" viewBox="0 0 6 4"><path d="M0,0.3 H5.6 L2.8,3.4 Z" fill="#000"/></svg>
<div class="a" style="left:177px;top:376px;width:46px;height:16px;background:#fff;border:1px solid #e9e9e9;border-top-color:#c2c2c2;"></div>
<div class="t" style="left:208.284375px;transform-origin:100% 0;top:380.08px;font-size:9px;font-weight:normal;color:#2a2a2a;transform:scaleX(0.9050);">6.0</div>
<div class="t" style="left:239.5px;transform-origin:0 0;top:380.08px;font-size:9px;font-weight:normal;color:#2a2a2a;transform:scaleX(0.9050);">8-14</div>
<div class="a" style="left:275px;top:376px;width:74px;height:16px;background:linear-gradient(#f4f4f4,#ececec 45%,#e0e0e0 55%,#dadada);border:1px solid #8e8e8e;border-radius:2px"></div>
<div class="t" style="left:277.8px;transform-origin:0 0;top:380.48px;font-size:9px;font-weight:normal;color:#2a2a2a;transform:scaleX(0.9050);">Stiff</div>
<svg class="a" style="left:339.5px;top:382.0px" width="6" height="4" viewBox="0 0 6 4"><path d="M0,0.3 H5.6 L2.8,3.4 Z" fill="#000"/></svg>
<div class="a" style="left:352px;top:376px;width:56px;height:16px;background:#fff;border:1px solid #e9e9e9;border-top-color:#c2c2c2;"></div>
<div class="a" style="left:353px;top:379px;width:54px;height:11px;background:#a6c6ea"></div>
<div class="t" style="left:383.86875px;transform-origin:100% 0;top:380.08px;font-size:9px;font-weight:normal;color:#2a2a2a;transform:scaleX(0.9050);">180.0</div>
<div class="a" style="left:411px;top:376px;width:56px;height:16px;background:#fff;border:1px solid #e9e9e9;border-top-color:#c2c2c2;"></div>
<div class="t" style="left:442.46875px;transform-origin:100% 0;top:380.08px;font-size:9px;font-weight:normal;color:#2a2a2a;transform:scaleX(0.9050);">220.0</div>
<div class="a" style="left:470px;top:376px;width:23px;height:16px;background:#fff;border:1px solid #e9e9e9;border-top-color:#c2c2c2;"></div>
<div class="t" style="left:473.06875px;transform-origin:100% 0;top:380.08px;font-size:9px;font-weight:normal;color:#2a2a2a;transform:scaleX(0.9050);">3.10</div>
<div class="a" style="left:495px;top:376px;width:29px;height:16px;background:#fff;border:1px solid #e9e9e9;border-top-color:#c2c2c2;"></div>
<div class="t" style="left:504.56875px;transform-origin:100% 0;top:380.08px;font-size:9px;font-weight:normal;color:#2a2a2a;transform:scaleX(0.9050);">1.33</div>
<div class="a" style="left:527px;top:376px;width:46px;height:16px;background:#fff;border:1px solid #e9e9e9;border-top-color:#c2c2c2;"></div>
<div class="t" style="left:553.36875px;transform-origin:100% 0;top:380.08px;font-size:9px;font-weight:normal;color:#2a2a2a;transform:scaleX(0.9050);">0.50</div>
<div class="a" style="left:575px;top:376px;width:41px;height:16px;background:#fff;border:1px solid #e9e9e9;border-top-color:#c2c2c2;"></div>
<div class="t" style="left:591.940625px;transform-origin:100% 0;top:380.08px;font-size:9px;font-weight:normal;color:#2a2a2a;transform:scaleX(0.9050);">113.0</div>
<svg class="a" style="left:618px;top:376px" width="74" height="16" viewBox="618 376 74 16">
<path d="M621.5,383 L625.5,382 L626.5,389.5 L622,389 Z" fill="#74b478" stroke="#4a8a50" stroke-width="0.5"/>
<path d="M626,384 L633.5,383.5 L633.5,389.5 L627,390.2 Z" fill="#6e94cc" stroke="#4a6aa0" stroke-width="0.5"/>
<path d="M623.5,380 Q628,377.5 632,380 L632,384.5 Q628,386.5 623.5,384.5 Z" fill="#e2686a" stroke="#b04848" stroke-width="0.5"/>
<path d="M624.5,380.2 Q628,378.5 631,380.2" stroke="#f4b0b0" stroke-width="0.8" fill="none"/>
<path d="M646,380 L650,384 H648 V387.5 H644 V384 H642 Z" fill="#9a10b8" stroke="#9a10b8" stroke-width="0.8"/><path d="M664,387.5 L668,383.5 H666 V380 H662 V383.5 H660 Z" fill="#9a10b8" stroke="#9a10b8" stroke-width="0.8"/><path d="M676,379 L687.5,390 M687.5,379 L676,390" stroke="#d8501e" stroke-width="1.4"/></svg>
<div class="t" style="left:14px;transform-origin:0 0;top:402.35px;font-size:9.5px;font-weight:bold;color:#151515;transform:scaleX(1.0000);">3</div>
<div class="a" style="left:26px;top:399px;width:91px;height:16px;background:linear-gradient(#f4f4f4,#ececec 45%,#e0e0e0 55%,#dadada);border:1px solid #8e8e8e;border-radius:2px"></div>
<div class="t" style="left:28.8px;transform-origin:0 0;top:403.48px;font-size:9px;font-weight:normal;color:#2a2a2a;transform:scaleX(0.9050);">Granular Soil</div>
<svg class="a" style="left:107.5px;top:405.0px" width="6" height="4" viewBox="0 0 6 4"><path d="M0,0.3 H5.6 L2.8,3.4 Z" fill="#000"/></svg>
<div class="a" style="left:118px;top:399px;width:58px;height:16px;background:linear-gradient(#f4f4f4,#ececec 45%,#e0e0e0 55%,#dadada);border:1px solid #8e8e8e;border-radius:2px"></div>
<div class="t" style="left:120.8px;transform-origin:0 0;top:403.48px;font-size:9px;font-weight:normal;color:#2a2a2a;transform:scaleX(0.9050);">SM</div>
<svg class="a" style="left:166.5px;top:405.0px" width="6" height="4" viewBox="0 0 6 4"><path d="M0,0.3 H5.6 L2.8,3.4 Z" fill="#000"/></svg>
<div class="a" style="left:177px;top:399px;width:46px;height:16px;background:#fff;border:1px solid #e9e9e9;border-top-color:#c2c2c2;"></div>
<div class="t" style="left:203.940625px;transform-origin:100% 0;top:403.08px;font-size:9px;font-weight:normal;color:#9a9a9a;transform:scaleX(0.9050);">11.0</div>
<div class="t" style="left:239.5px;transform-origin:0 0;top:403.08px;font-size:9px;font-weight:normal;color:#2a2a2a;transform:scaleX(0.9050);">14-25</div>
<div class="a" style="left:275px;top:399px;width:74px;height:16px;background:linear-gradient(#f4f4f4,#ececec 45%,#e0e0e0 55%,#dadada);border:1px solid #8e8e8e;border-radius:2px"></div>
<div class="t" style="left:277.8px;transform-origin:0 0;top:403.48px;font-size:9px;font-weight:normal;color:#2a2a2a;transform:scaleX(0.9050);">Medium Dense</div>
<svg class="a" style="left:339.5px;top:405.0px" width="6" height="4" viewBox="0 0 6 4"><path d="M0,0.3 H5.6 L2.8,3.4 Z" fill="#000"/></svg>
<div class="a" style="left:352px;top:399px;width:56px;height:16px;background:#fff;border:1px solid #e9e9e9;border-top-color:#c2c2c2;"></div>
<div class="a" style="left:353px;top:402px;width:54px;height:11px;background:#a6c6ea"></div>
<div class="t" style="left:383.86875px;transform-origin:100% 0;top:403.08px;font-size:9px;font-weight:normal;color:#2a2a2a;transform:scaleX(0.9050);">220.0</div>
<div class="a" style="left:411px;top:399px;width:56px;height:16px;background:#fff;border:1px solid #e9e9e9;border-top-color:#c2c2c2;"></div>
<div class="t" style="left:442.46875px;transform-origin:100% 0;top:403.08px;font-size:9px;font-weight:normal;color:#2a2a2a;transform:scaleX(0.9050);">350.0</div>
<div class="a" style="left:470px;top:399px;width:23px;height:16px;background:#fff;border:1px solid #e9e9e9;border-top-color:#c2c2c2;"></div>
<div class="t" style="left:473.06875px;transform-origin:100% 0;top:403.08px;font-size:9px;font-weight:normal;color:#2a2a2a;transform:scaleX(0.9050);">3.00</div>
<div class="a" style="left:495px;top:399px;width:29px;height:16px;background:#fff;border:1px solid #e9e9e9;border-top-color:#c2c2c2;"></div>
<div class="t" style="left:504.56875px;transform-origin:100% 0;top:403.08px;font-size:9px;font-weight:normal;color:#2a2a2a;transform:scaleX(0.9050);">1.33</div>
<div class="a" style="left:527px;top:399px;width:46px;height:16px;background:#fff;border:1px solid #e9e9e9;border-top-color:#c2c2c2;"></div>
<div class="t" style="left:553.36875px;transform-origin:100% 0;top:403.08px;font-size:9px;font-weight:normal;color:#2a2a2a;transform:scaleX(0.9050);">0.50</div>
<div class="a" style="left:575px;top:399px;width:41px;height:16px;background:#fff;border:1px solid #e9e9e9;border-top-color:#c2c2c2;"></div>
<div class="t" style="left:591.26875px;transform-origin:100% 0;top:403.08px;font-size:9px;font-weight:normal;color:#2a2a2a;transform:scaleX(0.9050);">122.0</div>
<svg class="a" style="left:618px;top:399px" width="74" height="16" viewBox="618 399 74 16">
<path d="M621.5,406 L625.5,405 L626.5,412.5 L622,412 Z" fill="#74b478" stroke="#4a8a50" stroke-width="0.5"/>
<path d="M626,407 L633.5,406.5 L633.5,412.5 L627,413.2 Z" fill="#6e94cc" stroke="#4a6aa0" stroke-width="0.5"/>
<path d="M623.5,403 Q628,400.5 632,403 L632,407.5 Q628,409.5 623.5,407.5 Z" fill="#e2686a" stroke="#b04848" stroke-width="0.5"/>
<path d="M624.5,403.2 Q628,401.5 631,403.2" stroke="#f4b0b0" stroke-width="0.8" fill="none"/>
<path d="M646,403 L650,407 H648 V410.5 H644 V407 H642 Z" fill="#9a10b8" stroke="#9a10b8" stroke-width="0.8"/><path d="M664,410.5 L668,406.5 H666 V403 H662 V406.5 H660 Z" fill="#fff" stroke="#b8b8b8" stroke-width="0.8"/><path d="M676,402 L687.5,413 M687.5,402 L676,413" stroke="#d8501e" stroke-width="1.4"/></svg>
<div class="a" style="left:7px;top:418px;width:686px;height:1px;background:#c4c4c4"></div>
<div class="a" style="left:7px;top:419px;width:686px;height:1px;background:#fafafa"></div>
<div class="a" style="left:240px;top:425px;width:220px;height:25px;border:1px solid #3c7fb1;border-radius:3px;background:linear-gradient(#f2fafd,#e6f2f8 50%,#d2e6f1 51%,#c4dcea);box-shadow:inset 0 0 0 1px #c6ecfb"></div>
<div class="t" style="left:314.784375px;transform-origin:50% 0;top:433.78px;font-size:9px;font-weight:normal;color:#2a2a2a;transform:scaleX(0.9139);">Calculate Results</div>
<div class="t" style="left:270.06875px;transform-origin:50% 0;top:488.98px;font-size:9px;font-weight:bold;color:#161616;transform:scaleX(1.0152);">Maximum Deflection is 0.20 in at 0.00 ft</div>
<div class="t" style="left:269.06875px;transform-origin:50% 0;top:504.28px;font-size:9px;font-weight:bold;color:#161616;transform:scaleX(1.0393);">Maximum Moment is 96.02 k-ft at 2.50 ft</div>
<div class="t" style="left:272.053125px;transform-origin:50% 0;top:518.88px;font-size:9px;font-weight:bold;color:#161616;transform:scaleX(1.0227);">Maximum Shear is 11.00 kips at 0.00 ft</div>
<div class="t" style="left:234.65468750000002px;transform-origin:50% 0;top:534.58px;font-size:9px;font-weight:bold;color:#161616;transform:scaleX(1.0379);">Pier/Pile Tip Movement is 0.00 in at the bottom (25.00 ft)</div>
<div class="t" style="left:201.7px;transform-origin:0 0;top:555.28px;font-size:9px;font-weight:normal;color:#3a3ab8;transform:scaleX(0.9097);">View Table</div>
<div class="t" style="left:321px;transform-origin:0 0;top:555.28px;font-size:9px;font-weight:normal;color:#3a3ab8;transform:scaleX(0.8915);">View All Graphs</div>
<div class="t" style="left:454.4px;transform-origin:0 0;top:555.28px;font-size:9px;font-weight:normal;color:#3a3ab8;transform:scaleX(0.8753);">View One Graph</div>
</body></html>
